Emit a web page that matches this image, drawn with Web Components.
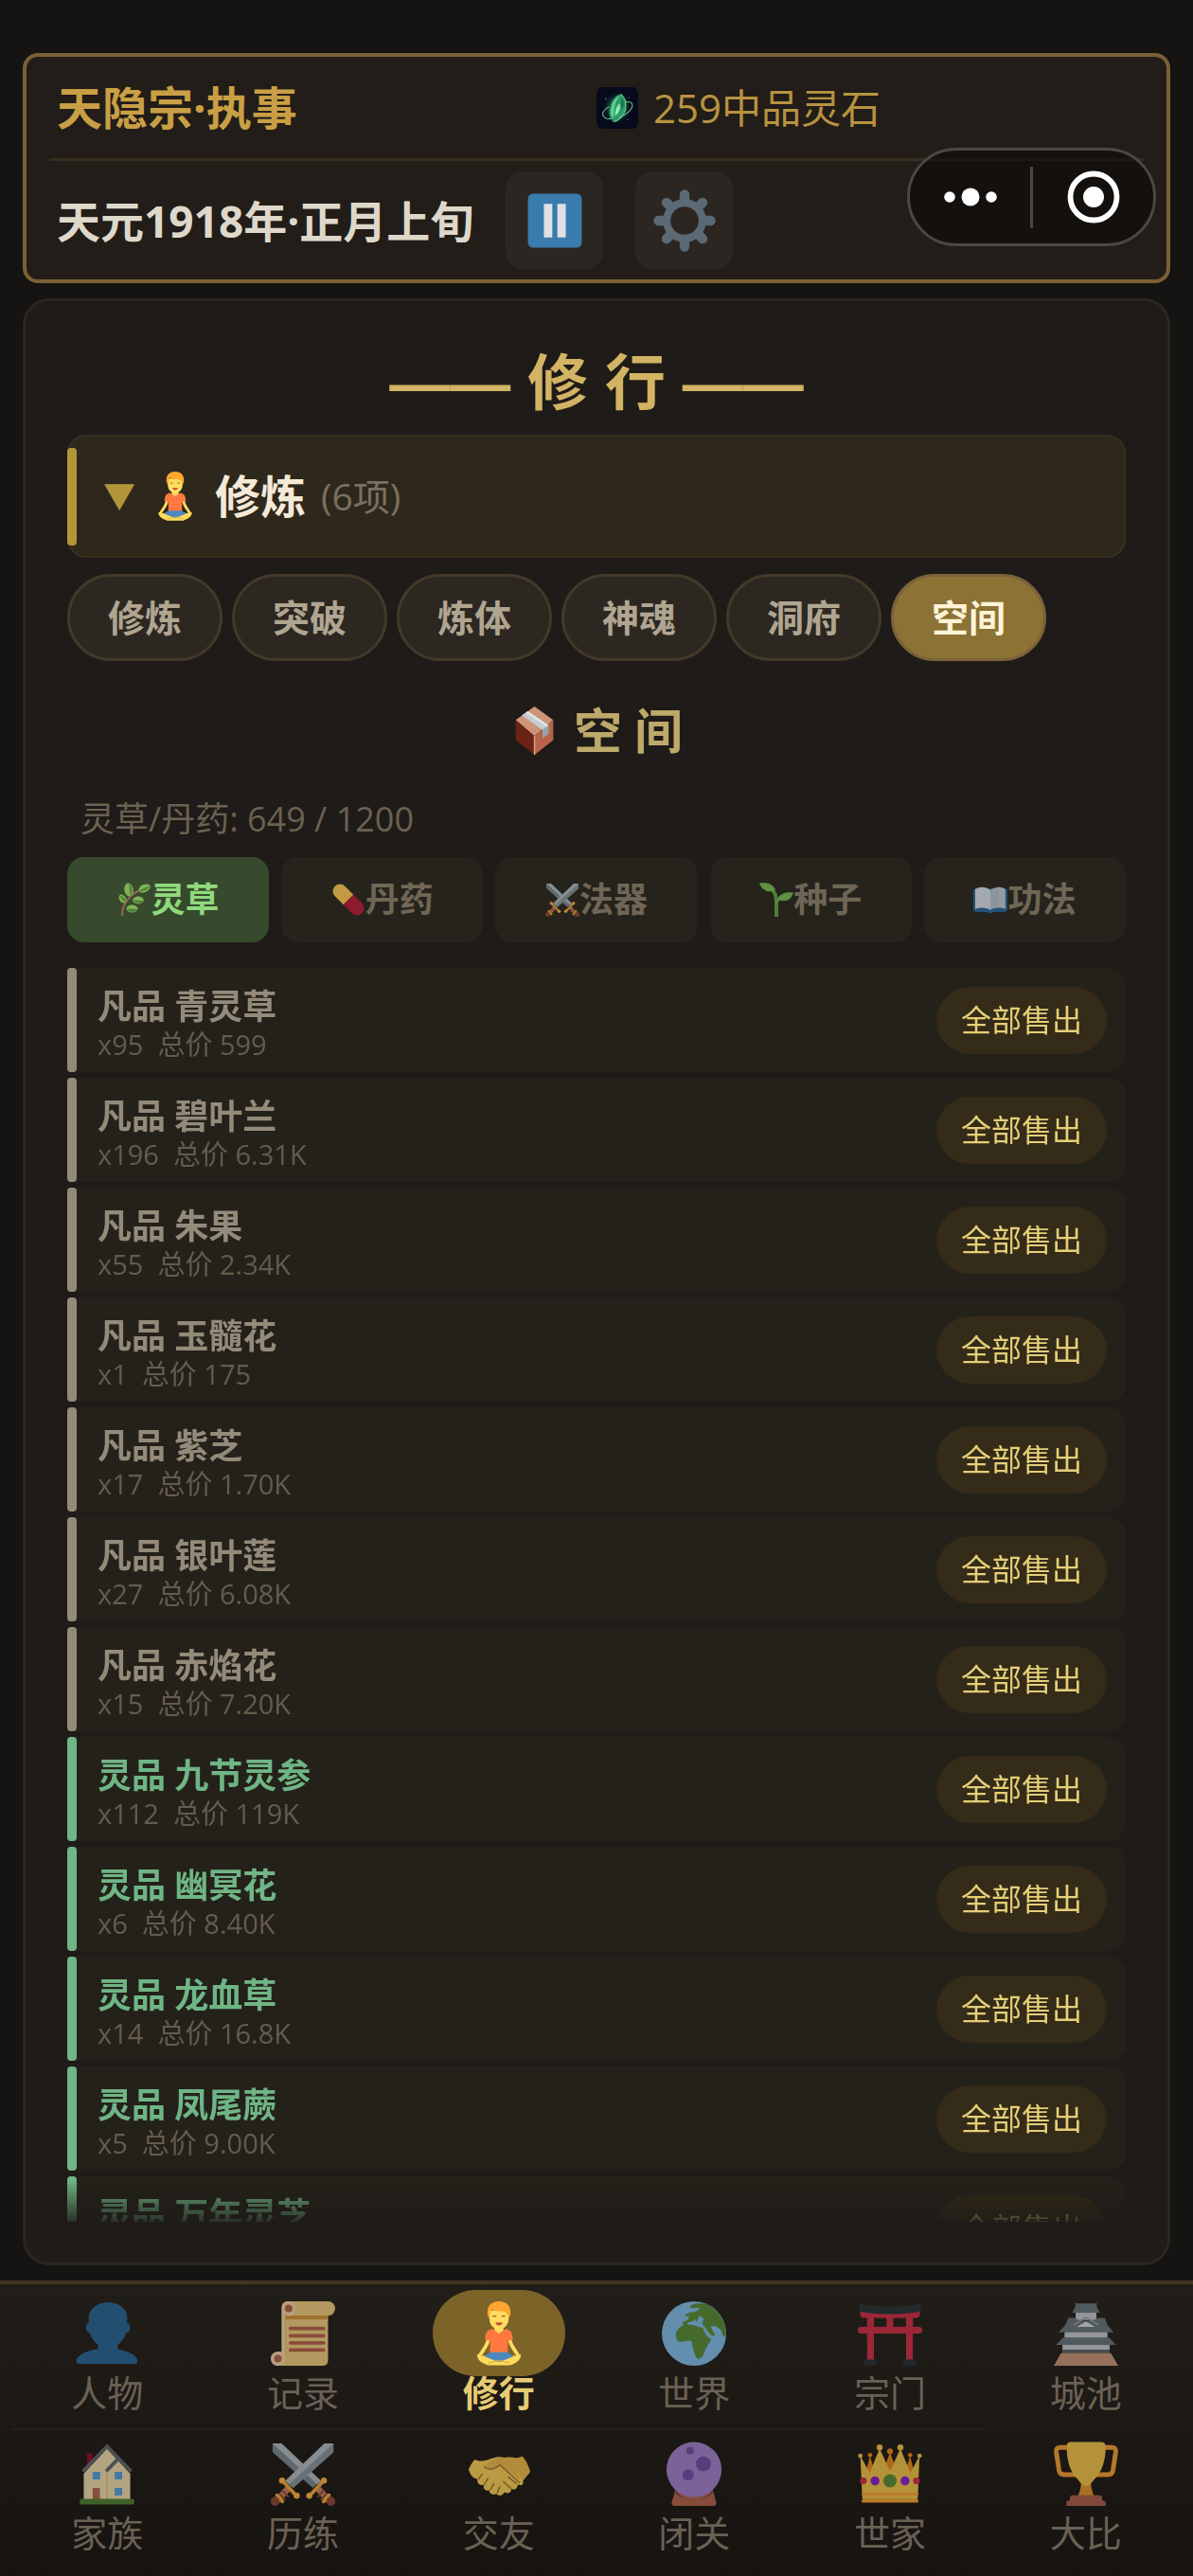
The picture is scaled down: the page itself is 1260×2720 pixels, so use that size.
<!DOCTYPE html>
<html lang="zh-CN">
<head>
    <meta charset="UTF-8">
    <meta name="viewport" content="width=device-width, initial-scale=1.0">
    <title>修行</title>

    <style>
        html {
            background: #151412;
        }
        body {
            margin: 0;
            height: 100vh;
            display: flex;
            flex-direction: column;
            font-family: "Open Sans", "Noto Sans CJK SC", sans-serif;
            color: #b0a591;
            background: #151412;
        }
    </style>
</head>
<body>

    <template id="tmpl-header">
        <style>
            :host {
                display: block;
                margin: 56px 24px 0;
                padding: 0 24px;
                border: 4px solid #7a6133;
                border-radius: 16px;
                background: #221d19;
            }
            .top {
                display: grid;
                grid-template-columns: 1fr 1fr;
                align-items: center;
                height: 107px;
                border-bottom: 3px solid #382e20;
            }
            .bottom {
                display: flex;
                align-items: center;
                gap: 34px;
                padding: 11px 0;
            }
            h1 {
                margin: 0;
                padding-left: 8px;
                font-size: 48px;
                line-height: 64px;
                color: #c99f45;
            }
            .date {
                min-width: 440px;
                padding-left: 8px;
                font-size: 46px;
                font-weight: 700;
                line-height: 64px;
                color: #ded8ca;
            }
            .money {
                display: flex;
                align-items: center;
                gap: 16px;
                font-size: 42px;
                line-height: 56px;
                color: #b89340;
            }
            button {
                display: flex;
                align-items: center;
                justify-content: center;
                width: 103px;
                height: 103px;
                padding: 0;
                border: 0;
                border-radius: 18px;
                background: #2b2622;
            }
        </style>
        <div class="top">
            <h1><slot name="title"></slot></h1>
            <div class="money"><game-icon name="stone" size="44"></game-icon><slot name="money"></slot></div>
        </div>
        <div class="bottom">
            <div class="date"><slot name="date"></slot></div>
            <button aria-label="暂停"><game-icon name="pause" size="64"></game-icon></button>
            <button aria-label="设置"><game-icon name="gear" size="66"></game-icon></button>
        </div>
    </template>

    <template id="tmpl-capsule">
        <style>
            /* floats over the header */
            :host {
                position: absolute;
                top: 156px;
                right: 39px;
                display: flex;
                align-items: center;
                box-sizing: border-box;
                width: 263px;
                height: 104px;
                border: 3px solid #4a4744;
                border-radius: 52px;
                background: rgba(10, 8, 6, 0.6);
            }
            button {
                flex: 1;
                display: flex;
                align-items: center;
                justify-content: center;
                padding: 0;
                border: 0;
                background: none;
            }
            i {
                width: 3px;
                height: 65px;
                background: #4a4744;
            }
        </style>
        <button aria-label="更多"><game-icon name="dots" size="60"></game-icon></button>
        <i></i>
        <button aria-label="关闭"><game-icon name="target" size="60"></game-icon></button>
    </template>

    <template id="tmpl-panel">
        <style>
            :host {
                flex: 1;
                min-height: 0;
                display: flex;
                flex-direction: column;
                margin: 16px 24px;
                padding: 47px 44px 43px;
                border: 3px solid #2a2620;
                border-radius: 28px;
                background: #1f1b18;
            }
            h2 {
                margin: 0 0 14px;
                font-family: "Liberation Sans", "Noto Sans CJK SC", sans-serif;
                font-size: 64px;
                line-height: 80px;
                text-align: center;
                color: #d2b464;
            }
        </style>
        <h2><slot name="title"></slot></h2>
        <slot></slot>
    </template>

    <template id="tmpl-toggle">
        <style>
            :host { display: block; }
            button {
                display: flex;
                align-items: center;
                gap: 16px;
                width: 100%;
                height: 130px;
                padding: 0;
                border: 0;
                border-radius: 20px;
                background: #2e271b;
                box-shadow: inset 0 0 0 2px #38301f;
                font: inherit;
                text-align: left;
            }
            .bar {
                width: 10px;
                height: 103px;
                margin-right: 12px;
                border-radius: 4px;
                background: #b39539;
            }
            .arrow {
                font-size: 34px;
                line-height: 48px;
                color: #b39539;
            }
            .name {
                font-size: 48px;
                font-weight: 700;
                line-height: 64px;
                color: #f4e9d7;
            }
            .count {
                font-size: 39px;
                line-height: 56px;
                color: #7a7060;
            }
        </style>
        <button aria-expanded="true">
            <span class="bar"></span>
            <span class="arrow">▼</span>
            <game-icon name="lotus" size="52"></game-icon>
            <span class="name"><slot></slot></span>
            <span class="count"><slot name="count"></slot></span>
        </button>
    </template>

    <template id="tmpl-pill">
        <style>
            :host { display: block; }
            button {
                height: 92px;
                padding: 0 40px;
                border: 3px solid #43392a;
                border-radius: 46px;
                background: #2c2721;
                font: inherit;
                font-size: 39px;
                font-weight: 700;
                line-height: 56px;
                color: #b0a591;
            }
            :host([active]) button {
                border-color: #7b6239;
                background: #8c7235;
                color: #fff3d6;
            }
        </style>
        <button><slot></slot></button>
    </template>

    <template id="tmpl-category">
        <style>
            :host {
                flex: 1;
                display: block;
            }
            button {
                display: flex;
                align-items: center;
                justify-content: center;
                width: 100%;
                height: 90px;
                padding: 0;
                border: 0;
                border-radius: 18px;
                background: #26231c;
                font: inherit;
                font-size: 36px;
                font-weight: 700;
                line-height: 48px;
                color: #6f6655;
            }
            :host([active]) button {
                background: #374a2d;
                color: #90d97c;
            }
        </style>
        <button><game-icon size="36"></game-icon><slot></slot></button>
    </template>

    <template id="tmpl-row">
        <style>
            :host {
                --grade: #938a7a;
                flex: none;
                display: flex;
                align-items: center;
                height: 110px;
                padding-right: 20px;
                border-radius: 4px 18px 18px 4px;
                background: #24211a;
            }
            :host([grade="灵品"]) { --grade: #6fb585; }
            .bar {
                align-self: stretch;
                width: 10px;
                border-radius: 4px;
                background: var(--grade);
            }
            .info {
                flex: 1;
                padding: 10px 0 0 22px;
            }
            .name {
                font-size: 36px;
                font-weight: 700;
                line-height: 42px;
                color: var(--grade);
            }
            .price {
                font-size: 29px;
                line-height: 38px;
                white-space: pre;
                color: #655b4c;
            }
            button {
                height: 71px;
                padding: 0 26px;
                border: 0;
                border-radius: 36px;
                background: #342b18;
                font: inherit;
                font-size: 32px;
                line-height: 44px;
                color: #e5cf78;
            }
        </style>
        <span class="bar"></span>
        <div class="info">
            <div class="name"></div>
            <div class="price"></div>
        </div>
        <button>全部售出</button>
    </template>

    <template id="tmpl-storage">
        <style>
            :host {
                flex: 1;
                min-height: 0;
                display: flex;
                flex-direction: column;
            }
            h3 {
                display: flex;
                align-items: center;
                justify-content: center;
                gap: 16px;
                margin: 41px 0 40px;
                font-size: 51px;
                line-height: 64px;
                color: #bda96a;
            }
            .pills {
                display: flex;
                gap: 10px;
                margin-top: 17px;
            }
            .usage {
                padding-left: 14px;
                margin-bottom: 18px;
                font-size: 36px;
                line-height: 44px;
                color: #6b6152;
            }
            .categories {
                display: flex;
                gap: 13px;
                margin-bottom: 27px;
            }
            .list {
                flex: 1;
                min-height: 0;
                overflow: hidden;
                display: flex;
                flex-direction: column;
                gap: 6px;
                -webkit-mask-image: linear-gradient(to bottom, #000 calc(100% - 44px), rgba(0, 0, 0, 0.15));
                mask-image: linear-gradient(to bottom, #000 calc(100% - 44px), rgba(0, 0, 0, 0.15));
            }
        </style>
        <div class="pills"><slot name="pill"></slot></div>
        <h3><game-icon name="box" size="51"></game-icon><slot name="title"></slot></h3>
        <div class="usage"><slot name="usage"></slot></div>
        <div class="categories"><slot name="category"></slot></div>
        <div class="list"></div>
    </template>

    <template id="tmpl-nav">
        <style>
            :host {
                display: block;
                padding: 6px 10px 26px;
                border-top: 4px solid #43361f;
                background: linear-gradient(#211d18, #171310);
            }
            nav {
                display: grid;
                grid-template-columns: repeat(6, 1fr);
            }
            .line {
                width: 83%;
                height: 2px;
                margin: 18px 0 0 3px;
                background: #24201b;
            }
        </style>
        <nav><slot name="first"></slot></nav>
        <div class="line"></div>
        <nav><slot name="second"></slot></nav>
    </template>

    <template id="tmpl-nav-item">
        <style>
            :host { display: block; }
            a {
                display: flex;
                flex-direction: column;
                align-items: center;
                text-decoration: none;
                color: #6a6155;
            }
            .icon {
                display: flex;
                align-items: center;
                justify-content: center;
                width: 140px;
                height: 91px;
                border-radius: 46px;
            }
            .label {
                margin-top: -3px;
                font-size: 38px;
                line-height: 40px;
            }
            :host([active]) .icon { background: #7c6429; }
            :host([active]) .label {
                font-weight: 700;
                color: #e6cc74;
            }
        </style>
        <a href="#">
            <span class="icon"><game-icon size="68"></game-icon></span>
            <span class="label"><slot></slot></span>
        </a>
    </template>

    <script>

        // every icon is drawn on a 36x36 grid
        const swords = `
            <path fill="#5f686c" d="M1 1h5l22 21-4.5 4L1 6z"/><path fill="#868d91" d="M6 1l22 21-2 2L1 1z"/>
            <path fill="#868d91" d="M35 1v5L12.500 26 8 22 30 1z"/><path fill="#687276" d="M35 1v5L12.500 26l-2.300-2z"/>
            <path stroke="#9a5f4a" stroke-width="3.600" d="M9.500 26.500L3.500 33M26.500 26.500l6 6.500"/>
            <path stroke="#6b3d2e" stroke-width="1" d="M6 27l4 4M4.500 29l3.500 3.500M30 27l-4 4M31.500 29L28 32.500"/>
            <path stroke="#b5802f" stroke-width="2" stroke-linecap="round" d="M6.500 22l8 8.500M29.500 22l-8 8.500M3.500 30l3 3.500M32.500 30l-3 3.500"/>
            <g fill="#bd8734"><circle cx="6.300" cy="21.800" r="1.700"/><circle cx="14.500" cy="30.300" r="1.700"/><circle cx="29.700" cy="21.800" r="1.700"/><circle cx="21.500" cy="30.300" r="1.700"/></g>
            <g fill="#6b3a2c"><circle cx="2.400" cy="33.400" r="2.500"/><circle cx="33.600" cy="33.400" r="2.500"/></g>`

        const icons = {
            stone: `
                <defs><radialGradient id="g"><stop offset="0" stop-color="#8ff0b0"/><stop offset=".5" stop-color="#2f9a63"/><stop offset="1" stop-color="#0a1f25" stop-opacity="0"/></radialGradient></defs>
                <rect width="36" height="36" rx="5" fill="#060a1c"/>
                <ellipse cx="18" cy="18" rx="13" ry="14" fill="url(#g)" opacity=".5"/>
                <path fill="#2c9a66" d="M21 6c4 3 5 8 4 13-1 6-6 10-10 11-4-2-5-8-3-13 1-5 4-10 9-11z"/>
                <path fill="#5fd394" d="M20 8c-4 4-5 9-5 19-3-2-3-6-2-10 1-4 3-8 7-9z"/>
                <path fill="#8cf0b4" d="M20 14c1 4 0 8-4 11 0-4 1-8 4-11z"/>
                <path fill="#1a7049" d="M22 9c2 3 2 7 0 10-1-3-1-6 0-10z"/>
                <g stroke="#6fd89a" stroke-width=".9" opacity=".85"><path d="M25 13c4-1 6 0 6 3s-5 8-11 10M11 17c-4 2-7 5-5 8 1 2 4 3 7 2"/><path d="M21 6c4 3 5 8 4 13-1 6-6 10-10 11"/></g>
                <g fill="#7be0a0" opacity=".7"><circle cx="8" cy="10" r=".6"/><circle cx="28" cy="9" r=".5"/><circle cx="27" cy="28" r=".5"/></g>`,
            pause: `<rect x="2" y="2" width="32" height="32" rx="3" fill="#3a7bad"/><path fill="#dee0e4" d="M11.500 8h5v20h-5zM19.500 8h5v20h-5z"/>`,
            gear: `
                <g stroke="#5b6a74" stroke-width="5.600" stroke-linecap="round"><path d="M18 3v30M3 18h30M7.600 7.600l20.800 20.800M28.400 7.600L7.600 28.400"/></g>
                <circle cx="18" cy="18" r="12.500" fill="#5b6a74"/><circle cx="18" cy="18" r="8.100" fill="#2b2622"/>`,
            dots: `<g fill="#fff"><circle cx="4.800" cy="18" r="3.500"/><circle cx="18" cy="18" r="5.700"/><circle cx="31.200" cy="18" r="3.500"/></g>`,
            target: `<circle cx="18" cy="18" r="14.700" stroke="#fff" stroke-width="3.500"/><circle cx="18" cy="18" r="6.600" fill="#fff"/>`,
            lotus: `
                <path fill="#ffdc5d" d="M15.500 13h5v6h-5z"/>
                <path stroke="#ffdc5d" stroke-width="2" stroke-linecap="round" d="M12 21c-.3 4-3 6-4.800 9.500M24 21c.3 4 3 6 4.800 9.500"/>
                <path fill="#ff7840" d="M14.500 15.500L18 18l3.500-2.500c3 .3 4.200 2 4.300 6L23 22v8H13v-8l-2.800-.5c.1-4 1.300-5.700 4.300-6z"/>
                <path fill="#ffdc5d" d="M5.800 29.500c-.4 3 2.400 5 6.200 6.300h12c3.800-1.300 6.600-3.300 6.200-6.300-2.200 1.500-5.200 1-7.200 0H13c-2 1-5 1.500-7.200 0z"/>
                <path fill="#4b88be" d="M13 28.500h10l3 2.300L18 34l-8-3.200z"/>
                <path stroke="#e0ae3c" stroke-width=".6" d="M12 34.500l6-1.500 6 1.500"/>
                <path fill="#ffdc5d" d="M12.600 5h10.800v4.500c0 3.500-2.300 6-5.400 6s-5.400-2.500-5.400-6z"/>
                <path fill="#ffa62f" d="M11.600 7.500C11.100 2.500 13.800 0 18 0s6.900 2.500 6.400 7.500l-1 2c-.4-2.500-1.400-3.700-3.400-4-2.500.2-5 0-6-1.200-.8 1.700-1.200 3.200-1.500 5.200z"/>
                <path stroke="#8b5a28" stroke-width=".6" d="M14.500 8.300h2M19.500 8.300h2"/><path fill="#c95045" d="M16 11.800h4c-.3 1.200-1 1.700-2 1.700s-1.700-.5-2-1.700z"/>`,
            box: `
                <path fill="#cd9478" d="M18 0l14 10-14 12L4 10z"/><path fill="#6a2314" d="M4 10l14 12v14L4 25z"/><path fill="#b8644a" d="M32 10L18 22v14l14-11z"/>
                <path stroke="#dba387" stroke-width="1" d="M18 22v14"/>
                <path fill="#c5cbd0" d="M8.500 6.500L13 3.500 28.500 14 24 17.500z"/><path fill="#e3e6e8" d="M11.500 4.500L13 3.500 28.500 14 27 15.200z"/>
                <path fill="#93a4af" d="M24 17.500l4.500-3.500v6.500L26 22l-2 2z"/>`,
            herb: `
                <path stroke="#9a6550" stroke-width="2" stroke-linecap="round" d="M5 34C5 22 14 11 28 6"/>
                <g fill="#7fb356"><ellipse cx="12" cy="7.500" rx="4.600" ry="7" transform="rotate(-8 12 7.500)"/><ellipse cx="28.500" cy="6" rx="6.500" ry="4" transform="rotate(-25 28.500 6)"/><ellipse cx="5.500" cy="17" rx="3.300" ry="5" transform="rotate(-35 5.500 17)"/><ellipse cx="22" cy="18.500" rx="5.800" ry="3.900"/><ellipse cx="15.500" cy="27.500" rx="6" ry="4"/></g>
                <g fill="#4e8439"><path d="M12 1c4 3 4.500 9 1.500 13.500zM22.500 8.500c4 2 9 0 12-5.500zM16.500 18.500c3 4 9 4.500 11.500.5zM9.500 27.500c3 4.500 9 5 12 .5zM2.500 14c2 4 4 5 6 7 .7-3-1.500-7-6-7z"/></g>`,
            pill: `
                <path stroke="#c39a41" stroke-width="15" stroke-linecap="round" d="M9 9l3 3"/><path stroke="#8d1b2d" stroke-width="15" stroke-linecap="round" d="M27 27l-3-3"/>
                <path fill="#c39a41" d="M6.700 17.300L17.300 6.700l6 6-10.600 10.600z"/><path fill="#8d1b2d" d="M12.700 23.300l10.600-10.600 6 6-10.600 10.600z"/>`,
            swords: swords,
            seedling: `
                <path stroke="#4c8238" stroke-width="4" d="M18 36V20c0-7-2-11-6-14"/>
                <path fill="#5f9145" d="M0 .5c7-1 14 0 17 7-3 2-7 2.500-10 1C3.500 7 1 4 0 .5z"/>
                <path fill="#5f9145" d="M36 10.500c-6-.7-12 0-16 5l-2 6 4-3c4 1 7 .7 9.500-1 2.500-2 3.500-4.500 4.500-7z"/>`,
            book: `
                <path fill="#235278" d="M0 10c0-3 1-4 4-4h28c3 0 4 1 4 4v17c0 3-1 4-4 4H21c0 1.500-6 1.500-6 0H4c-3 0-4-1-4-4z"/>
                <path fill="#a3a8ae" d="M2 7c5-3 11-3 16 1v21c-5-3-11-3-16-1z"/><path fill="#8b959c" d="M34 7c-5-3-11-3-16 1v21c5-3 11-3 16-1z"/>
                <path stroke="#b8bdc1" stroke-width="1" d="M5 5v21M8 4.500v22M31 5v21M28 4.500v22" opacity=".45"/>`,
            person: `<path fill="#224f70" d="M24 26.799v-2.566c2-1.348 4.080-3.779 4.703-6.896.186.103.206.17.413.17.991 0 1.709-1.287 1.709-2.873 0-1.562-.823-2.827-1.794-2.865.187-.674.293-1.577.293-2.735C29.324 5.168 26 .527 18.541.527c-6.629 0-10.777 4.641-10.777 8.507 0 1.123.069 2.043.188 2.755-.911.137-1.629 1.352-1.629 2.845 0 1.587.804 2.873 1.796 2.873.206 0 .025-.067.209-.17C8.952 20.453 11 22.885 13 24.232v2.414c-5 .645-12 3.437-12 6.230v1.061C1 35 2.076 35 3.137 35h29.725C33.924 35 35 35 35 33.938v-1.061c0-2.615-6-5.225-11-6.078z"/>`,
            scroll: `
                <path fill="#b3995f" d="M8 0h24v33c0 2-1 3-3 3H4l4-8z"/>
                <path fill="#a1712e" d="M8 7h24v3H8z"/>
                <rect x="8" y="0" width="28" height="8" rx="4" fill="#b3995f"/>
                <path fill="#b79f80" d="M10 0C7 0 6 1.500 6 4v24.300C4.700 27.800 0 28 0 32c0 2.500 1.700 4 4 4s4-1.500 4-4V7.500c3 1.500 6-.5 6-3.500S12 0 10 0z"/>
                <g fill="#8a4c3a"><circle cx="10" cy="4" r="2.100"/><circle cx="4" cy="32" r="2.100"/></g>
                <path stroke="#8a4c3a" stroke-width="2" stroke-linecap="round" d="M11 15.200h18.500M11 19.200h18.500M11 23.200h18.500M11 27.200h18.500"/>`,
            globe: `
                <circle cx="18" cy="18" r="18" fill="#638eae"/>
                <path fill="#456a2c" d="M25 1.500C31 4.500 36 10.500 36 18l-1 2c-1.500-.5-1-2.500-2-4-1-1.200-3.500-3-5.500-2 .5 2 1.500 3.500 2.500 4.500l-1.500 1c-2.500-1.500-3.500-4-5-6-2 .5-3.500 0-5-1l-3 .5-3.500.5-.5-2 3-1 1-2.500-2.500.5c0-1.500 2-2 3.500-2.500 2 .5 3.500-1 5-2-1.500-1-4 .5-5.500-.5C15 1.500 20 .7 25 1.500z"/>
                <path fill="#638eae" d="M14 12.500c1.500-1.500 3.500-1 4.500-2.500l1 1.500 1.500-3.500 2.500 1.500-1 2.500c1 1.500.5 2.500-1.500 2.500-2 .5-4 .5-7-2z"/>
                <path fill="#456a2c" d="M11.500 13.500c3-1 6-.5 8.500.5l3 1c1 3 2.500 5.500 4.500 6-.5 2.500-3 4.500-3.500 7-1 2.500-2.500 4.500-4 4.200-2-2-2-5.200-3-7.700 0-1.500-.5-2.500-1.500-2.500-2.500 0-4.500 1-6 .5-1.500-1-2-3-1.500-5 .7-2 2-3 3.500-4z"/>`,
            torii: `
                <g fill="#22272a"><rect x="3" y="32" width="7.800" height="4" rx="1.800"/><rect x="25.200" y="32" width="7.800" height="4" rx="1.800"/></g>
                <path fill="#9b2737" d="M5.200 8H9v24.500H5.200zM27 8h3.800v24.500H27zM16 8h3.800v7H16z"/>
                <rect x="0" y="14.200" width="36" height="3.800" rx="1.900" fill="#9b2737"/>
                <path fill="#9b2737" d="M1.200 5.500h33.600C34.800 8.500 34 9.300 32 9.300H4c-2 0-2.800-.8-2.800-3.800z"/>
                <path fill="#24292c" d="M.5 1.200C11 3.500 25 3.500 35.500 1.200L35 5.700C25 7.700 11 7.700 1 5.700z"/>`,
            castle: `
                <path fill="#939698" d="M12.200 5.500h11.600v5H12.200zM6 16.500h24v4H6zM4.800 23.500h26.400v4H4.800z"/>
                <path fill="#50595e" d="M12 0l.5 1.200h11L24 0v3l1.800 3.400H10.200L12 3zM8 9.300h4l2 1.500h8l2-1.500h4.500l1.500 4 3.500 4H2.500l4-4zM5 20.300h26l3.800 4H1.200z"/>
                <path stroke="#6f777b" stroke-width="1" d="M11 13.200l7-4.200 7 4.200"/><path fill="#a2a4a5" d="M12.800 14.300l5.200-3 5.200 3z"/>
                <path fill="#494d4e" d="M4.800 27h26.400v2.200H4.800z"/><path fill="#96705b" d="M4 29h28l4 7H0z"/>`,
            house: `
                <path fill="#740f20" d="M6.800 6.700h3V15h-3z"/>
                <path fill="#b3a481" d="M18 4l13 14v14.500H5V18z"/>
                <path stroke="#4b5053" stroke-width="2" d="M4.500 16.700L18 2.800l13.500 13.900M17.500 16.700l7.200-7.500"/>
                <path stroke="#ad8b46" stroke-width=".7" d="M18 18v14"/>
                <path fill="#417ba6" d="M10 17h4.200v4.200H10zM22.300 17h4.200v4.200h-4.200zM22.300 26h4.200v4.200h-4.200z"/><path fill="#874e3d" d="M10 26h4v6.500h-4z"/>
                <rect x="2.700" y="32" width="30.600" height="3.200" rx="1.500" fill="#3f6228"/>`,
            handshake: `
                <path fill="#b28b3a" d="M20 9.500c4-2 7 1 11-1.300 2 2 3.500 5 4.500 8.800l-5.300 6.500-5 2L14 16z"/>
                <path fill="#b99b43" d="M4.500 10c4 2 7 0 12-1.300 3-.3 6 .3 8 1.800L31 21c1.500 3-.5 4-2.500 3 0 2.500-2 3.500-3.500 2.300 0 2-2 3.300-4 2-.8 2-3 2.500-4.500 1-2 1-4-.3-4-2-2.500.5-3.500-1.300-3-3-2.500.3-4-1-3.500-3.300C2.500 20.500 1.500 17 1 15.500c1-2 2-4 3.500-5.500z"/>
                <path fill="#b28b3a" d="M9.500 14c3-2.500 5.500-4.500 9.500-5 2-.2 4 .5 6 1.500l5 11-11-8c-3 2-7 3.500-9.500.5z"/>
                <path stroke="#80592a" stroke-width=".8" d="M9.500 14c2.500 2.500 6.500 1.500 9-1l11 10M6.500 21l2.300-3M9.500 24.500l2.500-4M13 27.300l2.200-4M17 29l1.500-4M28 23.700l-5-4M24.800 26.300l-4.500-4"/>`,
            ball: `
                <path fill="#874c3b" d="M7.500 27h21l2 7.300c0 1-.5 1.700-1.500 1.700H7c-1 0-1.500-.7-1.500-1.700z"/><path fill="#5e3841" d="M7.500 27c6 8 15 8 21 0l.5 1.500c-6 6-16 6-22 0z"/>
                <circle cx="18" cy="15.700" r="15.400" fill="#7b6399"/>
                <g fill="#5a3d7d"><circle cx="15.800" cy="5.100" r="2.100"/><circle cx="23.200" cy="12.500" r="4.200"/><circle cx="14.700" cy="18.700" r="3.200"/></g>`,
            crown: `
                <g fill="#b06a16"><circle cx="6.800" cy="7.600" r="1.200"/><circle cx="18" cy="5.500" r="1.600"/><circle cx="29.200" cy="7.600" r="1.200"/><path d="M6.800 8L10 19H4zM18 6l5 14H13zM29.200 8L32 19h-6z"/></g>
                <path fill="#b4923a" d="M1.400 8l5.200 9.500L12.200 4 18 16.500 23.800 4l5.600 13.500L34.500 8 33.500 32H2.500z"/>
                <g fill="#b4923a"><circle cx="1.400" cy="8" r="1.300"/><circle cx="12.200" cy="3.300" r="1.700"/><circle cx="23.800" cy="3.300" r="1.700"/><circle cx="34.500" cy="8" r="1.300"/></g>
                <path stroke="#bb7b2a" stroke-width="1.900" stroke-linecap="round" d="M3 29.500h30M3 33.200h30"/><path fill="#b4923a" d="M3 30.500h30v1.700H3z"/>
                <circle cx="18" cy="22" r="3.700" fill="#456a2c"/><g fill="#6d1a9d"><circle cx="9.600" cy="22" r="2.500"/><circle cx="26.400" cy="22" r="2.500"/></g><g fill="#9b2737"><circle cx="3.100" cy="22" r="1.900"/><circle cx="32.800" cy="22" r="1.900"/></g>`,
            trophy: `
                <path stroke="#b5782a" stroke-width="2.600" stroke-linejoin="round" d="M9 3.300H3.500C2 3.300 1.200 4 1.400 6l1.500 10c.3 1.700 1 2.500 3 2.500h7M27 3.300h5.500c1.500 0 2.300.7 2.100 2.700l-1.500 10c-.3 1.700-1 2.500-3 2.500h-7"/>
                <path fill="#a97024" d="M15.500 21h5c.3 4 .8 7 2 9.500h-9c1.200-2.500 1.700-5.500 2-9.500z"/>
                <path fill="#b4923a" d="M9.500.3h17c1.700 0 2.500.8 2.500 2.500 0 8-2 13.500-5.500 17.500-2.500 2.500-3 4.500-5.500 4.500s-3-2-5.500-4.500C9 16.300 7.200 10.800 7.200 2.800c0-1.700.8-2.500 2.300-2.500z"/>
                <path fill="#80493a" d="M10.500 30h15c1 0 1.500.7 1.500 1.500V33h.5c1 0 1.500.7 1.500 1.500V36H7v-1.500c0-1 .5-1.500 1.500-1.500H9v-1.500c0-1 .5-1.500 1.500-1.500z"/>`
        }

        function attach (elem, id) {
            const shadow = elem.attachShadow({mode: 'open'})
            shadow.append( document.getElementById(id).content.cloneNode(true) )
            return shadow
        }

        customElements.define('game-icon', class extends HTMLElement {
            static observedAttributes = ['name']

            connectedCallback() {
                if (!this.shadowRoot) this.attachShadow({mode: 'open'})
                this.render()
            }

            attributeChangedCallback() {
                if (this.shadowRoot) this.render()
            }

            render() {
                const size = this.getAttribute("size")
                this.shadowRoot.innerHTML = `
                    <style>
                        :host { display: block; flex: none; }
                        svg { display: block; }
                    </style>
                    <svg width="${size}" height="${size}" viewBox="0 0 36 36" fill="none" aria-hidden="true">${icons[this.getAttribute("name")] || ""}</svg>`
            }
        })

        customElements.define('game-header', class extends HTMLElement {
            connectedCallback() { attach(this, "tmpl-header") }
        })

        customElements.define('capsule-menu', class extends HTMLElement {
            connectedCallback() { attach(this, "tmpl-capsule") }
        })

        customElements.define('game-panel', class extends HTMLElement {
            connectedCallback() { attach(this, "tmpl-panel") }
        })

        customElements.define('section-toggle', class extends HTMLElement {
            connectedCallback() { attach(this, "tmpl-toggle") }
        })

        // only one element of a group stays active
        function selectOne (elem) {
            elem.parentNode.querySelectorAll(elem.localName).forEach(function (other) {
                other.toggleAttribute("active", other === elem)
            })
        }

        customElements.define('pill-tab', class extends HTMLElement {
            connectedCallback() {
                attach(this, "tmpl-pill")
                this.addEventListener("click", () => selectOne(this))
            }
        })

        customElements.define('category-tab', class extends HTMLElement {
            connectedCallback() {
                const shadow = attach(this, "tmpl-category")
                shadow.querySelector("game-icon").setAttribute("name", this.getAttribute("icon"))
                this.addEventListener("click", () => selectOne(this))
            }
        })

        customElements.define('item-row', class extends HTMLElement {
            connectedCallback() {
                const shadow = attach(this, "tmpl-row")
                shadow.querySelector(".name").textContent = this.getAttribute("grade") + " " + this.getAttribute("name")
                shadow.querySelector(".price").textContent = "x" + this.getAttribute("count") + "  总价 " + this.getAttribute("price")
                shadow.querySelector("button").addEventListener("click", () => this.remove())
            }
        })

        const items = [
            ["凡品", "青灵草", "95", "599"],
            ["凡品", "碧叶兰", "196", "6.31K"],
            ["凡品", "朱果", "55", "2.34K"],
            ["凡品", "玉髓花", "1", "175"],
            ["凡品", "紫芝", "17", "1.70K"],
            ["凡品", "银叶莲", "27", "6.08K"],
            ["凡品", "赤焰花", "15", "7.20K"],
            ["灵品", "九节灵参", "112", "119K"],
            ["灵品", "幽冥花", "6", "8.40K"],
            ["灵品", "龙血草", "14", "16.8K"],
            ["灵品", "凤尾蕨", "5", "9.00K"],
            ["灵品", "万年灵芝", "3", "7.50K"]
        ]

        customElements.define('storage-view', class extends HTMLElement {
            connectedCallback() {
                const shadow = attach(this, "tmpl-storage")
                const list = shadow.querySelector(".list")

                items.forEach(function ([grade, name, count, price]) {
                    const row = document.createElement("item-row")
                    row.setAttribute("grade", grade)
                    row.setAttribute("name", name)
                    row.setAttribute("count", count)
                    row.setAttribute("price", price)
                    list.append(row)
                })
            }
        })

        customElements.define('bottom-nav', class extends HTMLElement {
            connectedCallback() { attach(this, "tmpl-nav") }
        })

        customElements.define('nav-item', class extends HTMLElement {
            connectedCallback() {
                const shadow = attach(this, "tmpl-nav-item")
                shadow.querySelector("game-icon").setAttribute("name", this.getAttribute("icon"))
                this.addEventListener("click", (event) => {
                    event.preventDefault()
                    selectOne(this)
                })
            }
        })
    </script>

    <game-header>
        <span slot="title">天隐宗·执事</span>
        <span slot="money">259中品灵石</span>
        <span slot="date">天元1918年·正月上旬</span>
    </game-header>

    <capsule-menu></capsule-menu>

    <game-panel>
        <span slot="title">—— 修 行 ——</span>

        <section-toggle>修炼<span slot="count">(6项)</span></section-toggle>

        <storage-view>
            <pill-tab slot="pill">修炼</pill-tab>
            <pill-tab slot="pill">突破</pill-tab>
            <pill-tab slot="pill">炼体</pill-tab>
            <pill-tab slot="pill">神魂</pill-tab>
            <pill-tab slot="pill">洞府</pill-tab>
            <pill-tab slot="pill" active>空间</pill-tab>

            <span slot="title">空 间</span>
            <span slot="usage">灵草/丹药: 649 / 1200</span>

            <category-tab slot="category" icon="herb" active>灵草</category-tab>
            <category-tab slot="category" icon="pill">丹药</category-tab>
            <category-tab slot="category" icon="swords">法器</category-tab>
            <category-tab slot="category" icon="seedling">种子</category-tab>
            <category-tab slot="category" icon="book">功法</category-tab>
        </storage-view>
    </game-panel>

    <bottom-nav>
        <nav-item slot="first" icon="person">人物</nav-item>
        <nav-item slot="first" icon="scroll">记录</nav-item>
        <nav-item slot="first" icon="lotus" active>修行</nav-item>
        <nav-item slot="first" icon="globe">世界</nav-item>
        <nav-item slot="first" icon="torii">宗门</nav-item>
        <nav-item slot="first" icon="castle">城池</nav-item>
        <nav-item slot="second" icon="house">家族</nav-item>
        <nav-item slot="second" icon="swords">历练</nav-item>
        <nav-item slot="second" icon="handshake">交友</nav-item>
        <nav-item slot="second" icon="ball">闭关</nav-item>
        <nav-item slot="second" icon="crown">世家</nav-item>
        <nav-item slot="second" icon="trophy">大比</nav-item>
    </bottom-nav>

</body>
</html>
